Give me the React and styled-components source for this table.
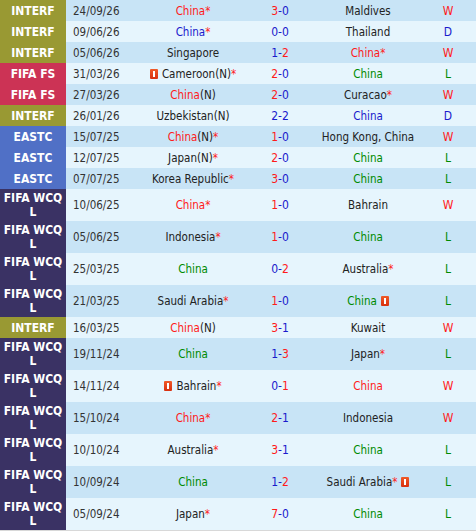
import React from "react";
import styled, { createGlobalStyle } from "styled-components";

const GlobalStyle = createGlobalStyle`
  body {
    margin: 0;
    background: #fff;
    font-family: "DejaVu Sans Condensed", "DejaVu Sans", sans-serif;
  }
`;

const COMP_COLORS = {
  "INTERF": "#999933",
  "FIFA FS": "#cc3355",
  "EASTC": "#5070c6",
  "FIFA WCQL": "#3a3264",
};

const RED = "#ff1a1a";
const BLUE = "#1a1acc";
const GREEN = "#008a00";
const RESULT_COLORS = { W: RED, D: BLUE, L: GREEN };

const Table = styled.div`
  width: 476px;
  border-bottom: 1px solid #d8d8d8;
`;

const Row = styled.div`
  display: grid;
  grid-template-columns: 66px 58px 138px 36px 140px 1fr;
  min-height: 21px;
  background: ${(p) => (p.$odd ? "#c8e4f6" : "#e6f5fd")};
  font-size: 11.5px;
  color: #222;
`;

const Comp = styled.div`
  background: ${(p) => p.$color};
  color: #fff;
  font-weight: bold;
  font-size: 12px;
  line-height: 14px;
  padding: 2px 2px;
  text-align: center;
  display: flex;
  align-items: center;
  justify-content: center;
`;

const Cell = styled.div`
  display: flex;
  align-items: center;
  justify-content: ${(p) => (p.$left ? "flex-start" : "center")};
  padding-left: ${(p) => (p.$left ? "7px" : "0")};
  color: ${(p) => (p.$left ? "#333" : "inherit")};
  white-space: nowrap;
`;

const Team = styled.span`
  color: ${(p) => p.$color || "#222"};
`;

const Star = styled.span`
  color: ${RED};
`;

const Card = styled.span`
  display: inline-block;
  position: relative;
  width: 8px;
  height: 10px;
  background: linear-gradient(#f05a28, #d8300f);
  border-radius: 1px;
  margin: ${(p) => (p.$after ? "0 0 0 4px" : "0 4px 0 0")};
  &::after {
    content: "";
    position: absolute;
    left: 3px;
    top: 2px;
    width: 2px;
    height: 6px;
    background: #fff;
  }
`;

const Score = styled(Cell)`
  font-size: 12px;
`;

const Result = styled.div`
  display: flex;
  align-items: center;
  justify-content: center;
  padding-right: 18px;
  font-size: 12px;
  color: ${(p) => RESULT_COLORS[p.$r]};
`;

// team: n name, neu "(N)", s star, cb/ca card before/after; China is coloured by result
const rows = [
  ["INTERF", "24/09/26", { n: "China", s: 1 }, [3, 0], { n: "Maldives" }, "W"],
  ["INTERF", "09/06/26", { n: "China", s: 1 }, [0, 0], { n: "Thailand" }, "D"],
  ["INTERF", "05/06/26", { n: "Singapore" }, [1, 2], { n: "China", s: 1 }, "W"],
  ["FIFA FS", "31/03/26", { n: "Cameroon", neu: 1, s: 1, cb: 1 }, [2, 0], { n: "China" }, "L"],
  ["FIFA FS", "27/03/26", { n: "China", neu: 1 }, [2, 0], { n: "Curacao", s: 1 }, "W"],
  ["INTERF", "26/01/26", { n: "Uzbekistan", neu: 1 }, [2, 2], { n: "China" }, "D"],
  ["EASTC", "15/07/25", { n: "China", neu: 1, s: 1 }, [1, 0], { n: "Hong Kong, China" }, "W"],
  ["EASTC", "12/07/25", { n: "Japan", neu: 1, s: 1 }, [2, 0], { n: "China" }, "L"],
  ["EASTC", "07/07/25", { n: "Korea Republic", s: 1 }, [3, 0], { n: "China" }, "L"],
  ["FIFA WCQL", "10/06/25", { n: "China", s: 1 }, [1, 0], { n: "Bahrain" }, "W"],
  ["FIFA WCQL", "05/06/25", { n: "Indonesia", s: 1 }, [1, 0], { n: "China" }, "L"],
  ["FIFA WCQL", "25/03/25", { n: "China" }, [0, 2], { n: "Australia", s: 1 }, "L"],
  ["FIFA WCQL", "21/03/25", { n: "Saudi Arabia", s: 1 }, [1, 0], { n: "China", ca: 1 }, "L"],
  ["INTERF", "16/03/25", { n: "China", neu: 1 }, [3, 1], { n: "Kuwait" }, "W"],
  ["FIFA WCQL", "19/11/24", { n: "China" }, [1, 3], { n: "Japan", s: 1 }, "L"],
  ["FIFA WCQL", "14/11/24", { n: "Bahrain", s: 1, cb: 1 }, [0, 1], { n: "China" }, "W"],
  ["FIFA WCQL", "15/10/24", { n: "China", s: 1 }, [2, 1], { n: "Indonesia" }, "W"],
  ["FIFA WCQL", "10/10/24", { n: "Australia", s: 1 }, [3, 1], { n: "China" }, "L"],
  ["FIFA WCQL", "10/09/24", { n: "China" }, [1, 2], { n: "Saudi Arabia", s: 1, ca: 1 }, "L"],
  ["FIFA WCQL", "05/09/24", { n: "Japan", s: 1 }, [7, 0], { n: "China" }, "L"],
];

const TeamCell = ({ t, r }) => (
  <Cell>
    {t.cb && <Card />}
    <Team $color={t.n === "China" ? RESULT_COLORS[r] : null}>{t.n}</Team>
    {t.neu && <Team>(N)</Team>}
    {t.s && <Star>*</Star>}
    {t.ca && <Card $after />}
  </Cell>
);

const scoreColor = (a, b) => (a > b ? RED : BLUE);

export default function App() {
  return (
    <>
      <GlobalStyle />
      <Table>
        {rows.map(([comp, date, home, [h, a], away, r], i) => (
          <Row key={i} $odd={i % 2 === 0}>
            <Comp $color={COMP_COLORS[comp]}>
              {comp === "FIFA WCQL" ? "FIFA WCQ L" : comp}
            </Comp>
            <Cell $left>{date}</Cell>
            <TeamCell t={home} r={r} />
            <Score>
              <span style={{ color: scoreColor(h, a) }}>{h}</span>
              <span style={{ color: BLUE }}>-</span>
              <span style={{ color: scoreColor(a, h) }}>{a}</span>
            </Score>
            <TeamCell t={away} r={r} />
            <Result $r={r}>{r}</Result>
          </Row>
        ))}
      </Table>
    </>
  );
}
